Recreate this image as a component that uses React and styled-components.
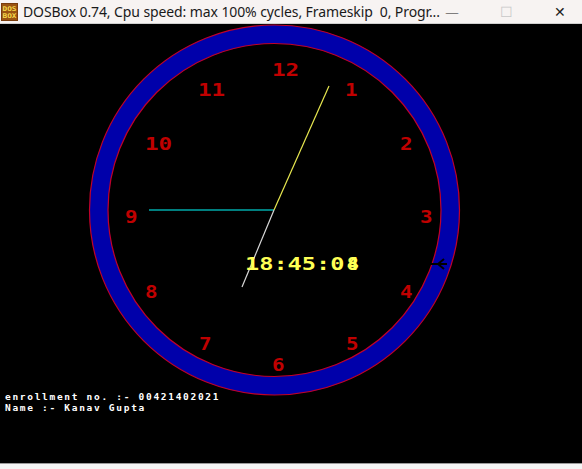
import React from 'react';
import styled, { createGlobalStyle } from 'styled-components';

const GlobalStyle = createGlobalStyle`
  html, body {
    margin: 0;
    padding: 0;
    background: #000;
  }
  body {
    font-family: "Noto Sans", "Open Sans", sans-serif;
  }
`;

const numerals = [
  { label: '12', x: 272, y: 63 },
  { label: '1', x: 345, y: 83 },
  { label: '2', x: 400, y: 137 },
  { label: '3', x: 420, y: 210 },
  { label: '4', x: 400, y: 285 },
  { label: '5', x: 346, y: 337 },
  { label: '6', x: 272, y: 358 },
  { label: '7', x: 199, y: 337 },
  { label: '8', x: 145, y: 285 },
  { label: '9', x: 125, y: 210 },
  { label: '10', x: 145, y: 137 },
  { label: '11', x: 198, y: 83 },
];

const PITCH = 14.55;

const DosBoxIcon = () => (
  <svg width="17" height="18" viewBox="0 0 17 18">
    <rect x="0" y="0" width="17" height="18" fill="#7a3c0c" />
    <rect x="1" y="1" width="15" height="16" fill="#9a5412" />
    <text x="8.5" y="7.5" fontSize="6.5" fontWeight="700" fill="#f5d84a" textAnchor="middle"
      fontFamily="'DejaVu Sans Mono', monospace" textLength="14" lengthAdjust="spacingAndGlyphs">DOS</text>
    <text x="8.5" y="15" fontSize="6.5" fontWeight="700" fill="#f5d84a" textAnchor="middle"
      fontFamily="'DejaVu Sans Mono', monospace" textLength="14" lengthAdjust="spacingAndGlyphs">BOX</text>
  </svg>
);

const Clock = () => (
  <ClockSvg viewBox="0 24 582 366" width="582" height="366">
    <circle cx="274.5" cy="210" r="185" fill="#0000aa" stroke="#c0002a" strokeWidth="1.2" />
    <circle cx="274.5" cy="210" r="166.5" fill="#000" stroke="#c0002a" strokeWidth="1.2" />
    {numerals.map((n) => (
      <DosText
        key={n.label}
        x={n.x}
        y={n.y + 12.6}
        fill="#c00000"
        textLength={PITCH * n.label.length - 2}
        lengthAdjust="spacingAndGlyphs"
      >
        {n.label}
      </DosText>
    ))}
    <line x1="149" y1="210" x2="274" y2="210" stroke="#00aaaa" strokeWidth="1.4" />
    <line x1="274" y1="210" x2="329" y2="86" stroke="#e8e850" strokeWidth="1.2" />
    <line x1="274" y1="210" x2="242" y2="287" stroke="#d8d8d8" strokeWidth="1.2" />
    <DosText x="245" y="269.5" fill="#ffff55" textLength={PITCH * 7 - 2.5} lengthAdjust="spacingAndGlyphs">
      18:45:0
    </DosText>
    <DosText x={245 + PITCH * 7} y="269.5" fill="#ffff55" textLength={PITCH - 2.5} lengthAdjust="spacingAndGlyphs">
      8
    </DosText>
    <DosText x={245 + PITCH * 7} y="269.5" fill="#ffff55" textLength={PITCH - 2.5} lengthAdjust="spacingAndGlyphs">
      4
    </DosText>
    {/* mouse pointer */}
    <g fill="none" stroke="#000" strokeWidth="2">
      <line x1="430" y1="264" x2="447" y2="264" />
      <path d="M444 259 L438 264 L444 269" />
    </g>
  </ClockSvg>
);

export default function App() {
  return (
    <Window>
      <GlobalStyle />
      <TitleBar>
        <DosBoxIcon />
        <Title>DOSBox 0.74, Cpu speed: max 100% cycles, Frameskip&nbsp; 0, Progr...</Title>
        <Controls>
          <Ctrl>—</Ctrl>
          <Ctrl $dim>☐</Ctrl>
          <Ctrl>✕</Ctrl>
        </Controls>
      </TitleBar>
      <Screen>
        <Clock />
        <Console>
          <Line>enrollment no. :- 00421402021</Line>
          <Line>Name :- Kanav Gupta</Line>
        </Console>
      </Screen>
      <BottomEdge />
    </Window>
  );
}

const Window = styled.div`
  width: 582px;
  height: 469px;
  display: flex;
  flex-direction: column;
  background: #000;
  overflow: hidden;
`;

const TitleBar = styled.div`
  height: 23px;
  flex: 0 0 23px;
  display: flex;
  align-items: center;
  padding-left: 1px;
  background: #f7f3f2;
  border-bottom: 1px solid #cfcfcf;
`;

const Title = styled.div`
  margin-left: 5px;
  font-size: 14px;
  color: #1a1a1a;
  white-space: nowrap;
  letter-spacing: -0.1px;
  flex: 1;
`;

const Controls = styled.div`
  display: flex;
  align-items: center;
  gap: 34px;
  padding-right: 12px;
`;

const Ctrl = styled.div`
  width: 20px;
  text-align: center;
  font-size: 14px;
  color: ${({ $dim }) => ($dim ? '#c8c8c8' : '#222')};
  font-family: "DejaVu Sans", sans-serif;
  font-weight: 300;
`;

const Screen = styled.div`
  flex: 1;
  display: flex;
  flex-direction: column;
  background: #000;
`;

const ClockSvg = styled.svg`
  display: block;
  overflow: visible;
  flex: 0 0 auto;
`;

const DosText = styled.text`
  font-family: "DejaVu Sans Mono", monospace;
  font-weight: 700;
  font-size: 17px;
`;

const Console = styled.div`
  padding: 2px 0 0 5px;
`;

const Line = styled.div`
  font-family: "DejaVu Sans Mono", monospace;
  font-weight: 700;
  font-size: 9.5px;
  line-height: 10.5px;
  color: #fff;
  white-space: pre;
  letter-spacing: 1.7px;
`;

const BottomEdge = styled.div`
  flex: 0 0 5px;
  background: #f4f4f4;
  border-top: 1px solid #9a9a9a;
`;
